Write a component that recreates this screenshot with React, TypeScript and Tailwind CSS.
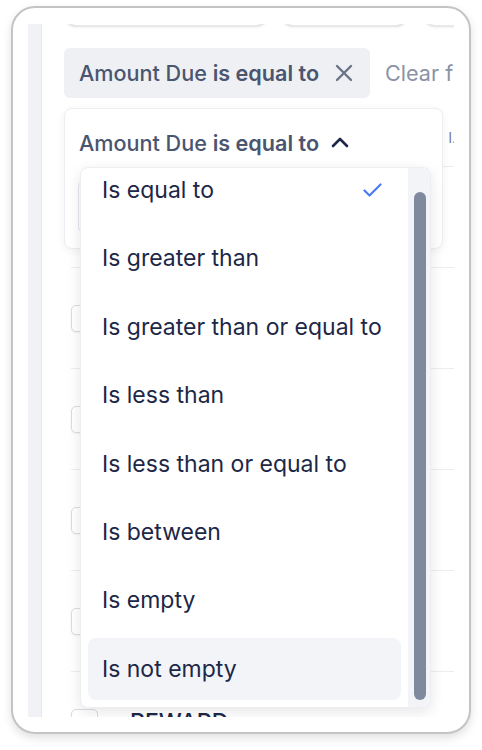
import React from "react"

const options = [
  "Is equal to",
  "Is greater than",
  "Is greater than or equal to",
  "Is less than",
  "Is less than or equal to",
  "Is between",
  "Is empty",
  "Is not empty",
]

const rows = ["INVOICE", "PAYMENT", "CREDIT", "REFUND", "DEPOSIT", "REWARD"]

function XIcon() {
  return (
    <svg width="18" height="18" viewBox="0 0 18 18" fill="none">
      <path d="M2 2L16 16M16 2L2 16" stroke="#6b7487" strokeWidth="2.4" strokeLinecap="round" />
    </svg>
  )
}

function ChevronUp() {
  return (
    <svg width="18" height="11" viewBox="0 0 18 11" fill="none">
      <path d="M2 9L9 2L16 9" stroke="#1d2747" strokeWidth="2.6" strokeLinecap="round" strokeLinejoin="round" />
    </svg>
  )
}

function Check() {
  return (
    <svg width="19" height="14" viewBox="0 0 19 14" fill="none">
      <path d="M1.5 7.5L6.5 12.5L17.5 1.5" stroke="#4a7cf6" strokeWidth="2.2" strokeLinecap="round" strokeLinejoin="round" />
    </svg>
  )
}

function Dropdown() {
  return (
    <div className="absolute left-[15px] top-[58px] flex h-[541px] w-[351px] overflow-hidden rounded-lg border border-[#eceef2] bg-white shadow-[0_4px_14px_rgba(15,23,42,0.10)]">
      <div className="flex-1 overflow-hidden">
        <div className="-mt-[12px]">
          {options.map((opt, i) => (
            <div key={opt} className="h-[68.43px] px-[7px] py-[3px]">
              <div
                className={`flex h-full items-center justify-between whitespace-nowrap rounded-lg pl-[14px] pr-[19px] ${
                  i === options.length - 1 ? "bg-[#f2f4f8]" : ""
                }`}
              >
                <span>{opt}</span>
                {i === 0 && <Check />}
              </div>
            </div>
          ))}
        </div>
      </div>
      <div className="w-[22px] bg-[#f3f4f7] pl-[6px] pr-[4px] pt-[24px] pb-[7px]">
        <div className="h-full w-[12px] rounded-full bg-[#808a9f]" />
      </div>
    </div>
  )
}

export default function App() {
  return (
    <div className="min-h-[750px] bg-white pl-[11px] pt-[6px]" style={{ fontFamily: "Inter, 'Liberation Sans', sans-serif" }}>
      <div className="h-[728px] w-[460px] rounded-[24px] border-2 border-[#c4c4c4] bg-white px-[15px] pt-[16px] shadow-[0_4px_10px_rgba(0,0,0,0.12)]">
        <div className="flex h-[693px] w-[426px] overflow-hidden">
          <div className="w-[14px] shrink-0 border-r border-[#e6e8ed] bg-[#f1f2f6]" />
          <div className="relative min-w-0 flex-1 pl-[22px]">
            <div className="-mt-[38px] flex gap-[13px]">
              <div className="h-[40px] w-[204px] shrink-0 rounded-xl border border-[#e5e7eb] bg-white shadow-sm" />
              <div className="h-[40px] w-[127px] shrink-0 rounded-xl border border-[#e5e7eb] bg-white shadow-sm" />
              <div className="ml-[2px] h-[40px] w-[120px] shrink-0 rounded-xl border border-[#e5e7eb] bg-white shadow-sm" />
            </div>

            <div className="mt-[22px] flex items-center whitespace-nowrap">
              <div className="flex h-[50px] w-[306px] shrink-0 items-center rounded-md bg-[#eef0f4] pl-[15px] text-[21.6px] text-[#4a5570]">
                <span className="font-medium">Amount Due&nbsp;</span>
                <span className="font-semibold">is equal to</span>
                <span className="ml-[16px]">
                  <XIcon />
                </span>
              </div>
              <span className="ml-[15px] text-[21.6px] text-[#8a93a6]">Clear filters</span>
            </div>

            <div className="ml-[7px] mt-[10px]">
              <div className="flex h-[59px] items-center justify-end border-b border-[#eceef1] text-[14px] text-[#6b7590]">
                <span className="translate-x-[10px]">l...</span>
              </div>
              {rows.map((r) => (
                <div key={r} className="flex h-[101px] items-center border-b border-[#eceef1]">
                  <div className="h-[27px] w-[27px] shrink-0 rounded-[5px] border border-[#d9dce3] bg-white shadow-[0_1px_2px_rgba(0,0,0,0.05)]" />
                  <span className="ml-[32px] text-[23px] font-medium text-[#1d2747]">{r}</span>
                </div>
              ))}
            </div>

            <div className="absolute left-[22px] top-[84px] h-[141px] w-[379px] rounded-lg border border-[#eceef2] bg-white shadow-[0_2px_8px_rgba(15,23,42,0.06)]">
              <div className="flex items-center whitespace-nowrap pl-[14px] pt-[18px] text-[21.6px] text-[#4a5570]">
                <span className="font-medium">Amount Due&nbsp;</span>
                <span className="font-semibold">is equal to</span>
                <span className="ml-[12px] mt-[-2px]">
                  <ChevronUp />
                </span>
              </div>
              <div className="ml-[13px] mt-[22px] h-[52px] w-[351px] rounded-md border border-[#e3e6eb]" />
              <div className="text-[23px] text-[#1d2747]">
                <Dropdown />
              </div>
            </div>
          </div>
        </div>
      </div>
    </div>
  )
}
